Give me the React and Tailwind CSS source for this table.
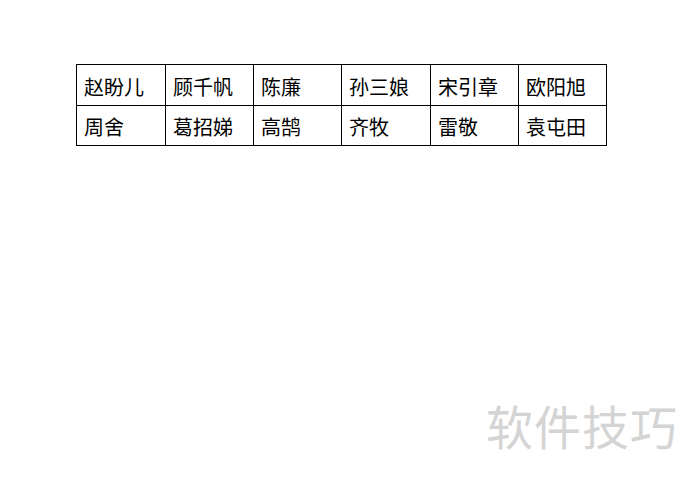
import React from "react";

const rows = [
  ["赵盼儿", "顾千帆", "陈廉", "孙三娘", "宋引章", "欧阳旭"],
  ["周舍", "葛招娣", "高鹄", "齐牧", "雷敬", "袁屯田"],
];

const widths = ["w-[89px]", "w-[88px]", "w-[88px]", "w-[89px]", "w-[88px]", "w-[88px]"];

const App = () => {
  return (
    <div
      className="relative w-[685px] h-[479px] bg-white overflow-hidden pt-[64px] pl-[76px]"
      style={{ fontFamily: '"Noto Sans CJK SC", "Noto Sans", sans-serif' }}
    >
      <table className="border-collapse table-fixed text-[20px] leading-none text-black">
        <tbody>
          {rows.map((row, r) => (
            <tr key={r} className={r === 0 ? "h-[41px]" : "h-[40px]"}>
              {row.map((name, i) => (
                <td
                  key={name}
                  className={`${widths[i]} border border-black px-[7px] pt-[3px] align-middle whitespace-nowrap`}
                >
                  {name}
                </td>
              ))}
            </tr>
          ))}
        </tbody>
      </table>
      {/* watermark */}
      <div className="absolute left-[486px] top-[401px] text-[47px] leading-none tracking-[1px] text-[#d4d4d4]">
        软件技巧
      </div>
    </div>
  );
};

export default App;
